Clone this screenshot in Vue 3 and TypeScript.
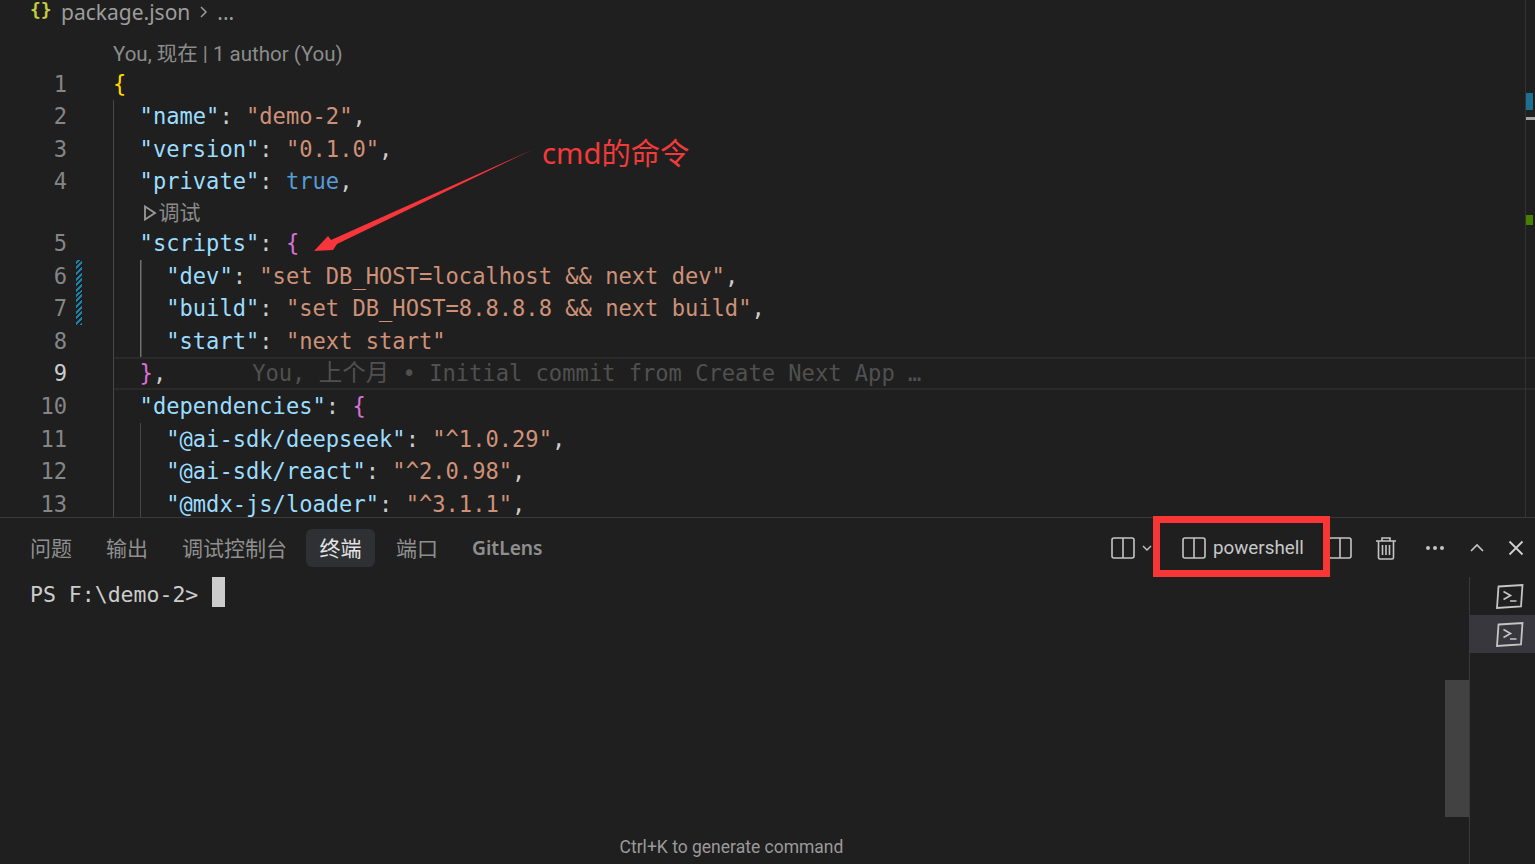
<script setup lang="ts">
type Tok = [string, string]
interface Line { n: number; indent: number; toks: Tok[]; guide2?: boolean; changed?: boolean; current?: boolean; ghost?: [string, string, string]; lensBefore?: boolean }

const kv = (k: string, v: string, vc = 's', tail = ','): Tok[] => [
  ['k', `"${k}"`], ['p', ': '], [vc, v], ['p', tail],
]

const lines: Line[] = [
  { n: 1, indent: 0, toks: [['y', '{']] },
  { n: 2, indent: 1, toks: kv('name', '"demo-2"') },
  { n: 3, indent: 1, toks: kv('version', '"0.1.0"') },
  { n: 4, indent: 1, toks: kv('private', 'true', 'b') },
  { n: 5, indent: 1, lensBefore: true, toks: kv('scripts', '{', 'm', '') },
  { n: 6, indent: 2, guide2: true, changed: true, toks: kv('dev', '"set DB_HOST=localhost && next dev"') },
  { n: 7, indent: 2, guide2: true, changed: true, toks: kv('build', '"set DB_HOST=8.8.8.8 && next build"') },
  { n: 8, indent: 2, guide2: true, toks: kv('start', '"next start"', 's', '') },
  { n: 9, indent: 1, current: true, ghost: ['You, ', '上个月', ' • Initial commit from Create Next App …'], toks: [['m', '}'], ['p', ',']] },
  { n: 10, indent: 1, toks: kv('dependencies', '{', 'm', '') },
  { n: 11, indent: 2, toks: kv('@ai-sdk/deepseek', '"^1.0.29"') },
  { n: 12, indent: 2, toks: kv('@ai-sdk/react', '"^2.0.98"') },
  { n: 13, indent: 2, toks: kv('@mdx-js/loader', '"^3.1.1"') },
]

const tabs = ['问题', '输出', '调试控制台', '终端', '端口', 'GitLens']
</script>

<template>
  <div class="app">
    <section class="editor">
      <div class="crumbs">
        <span class="json-icon">{}</span>
        <span class="crumb-name">package.json</span>
        <svg class="crumb-chev" width="10" height="14" viewBox="0 0 10 14"><path d="M2 2l5 5-5 5" fill="none" stroke="#9a9a9a" stroke-width="1.5" /></svg>
        <span class="crumb-more">...</span>
      </div>
      <div class="lens top-lens">You, 现在 | 1 author (You)</div>
      <template v-for="l in lines" :key="l.n">
        <div v-if="l.lensBefore" class="line lens-row">
          <span class="num"></span><span class="mark"></span>
          <div class="code"><span class="guide"></span><span class="debug">
            <svg width="14" height="16" viewBox="0 0 14 16"><path d="M2 1.500l10 6.500-10 6.500z" fill="none" stroke="#9a9a9a" stroke-width="1.8" /></svg>调试</span></div>
        </div>
        <div class="line" :class="{ current: l.current }">
          <span class="num">{{ l.n }}</span>
          <span class="mark" :class="{ changed: l.changed }"></span>
          <div class="code">
            <span v-if="l.indent > 0" class="guide"></span>
            <span v-if="l.indent > 1" class="guide" :class="{ active: l.guide2 }"></span>
            <span v-for="(t, i) in l.toks" :key="i" :class="t[0]">{{ t[1] }}</span>
            <span v-if="l.ghost" class="ghost">{{ l.ghost[0] }}<span class="ghost-cjk">{{ l.ghost[1] }}</span>{{ l.ghost[2] }}</span>
          </div>
        </div>
      </template>

      <div class="ruler">
        <i class="r-blue"></i><i class="r-gray"></i><i class="r-green"></i>
      </div>

      <svg class="arrow" width="240" height="120" viewBox="0 0 240 120">
        <path d="M4 106 L18 91 L21 95 L224 4 L27 99 L23 105 Z" fill="#f8353a" />
      </svg>
      <div class="note">cmd的命令</div>
    </section>

    <section class="panel">
      <header class="bar">
        <nav class="tabs">
          <span v-for="t in tabs" :key="t" class="tab" :class="{ on: t === '终端', git: t === 'GitLens' }">{{ t }}</span>
        </nav>
        <div class="tools">
          <svg class="ic split" width="24" height="24" viewBox="0 0 24 24"><rect x="1" y="2" width="22" height="20" rx="2" fill="none" stroke="#c5c5c5" stroke-width="1.6" /><path d="M12 2v20" stroke="#c5c5c5" stroke-width="1.6" /></svg>
          <svg class="ic caret" width="12" height="8" viewBox="0 0 12 8"><path d="M2 2l4 4 4-4" fill="none" stroke="#c5c5c5" stroke-width="1.4" /></svg>
          <div class="ps">
            <svg width="24" height="24" viewBox="0 0 24 24"><rect x="1" y="2" width="22" height="20" rx="2" fill="none" stroke="#c5c5c5" stroke-width="1.6" /><path d="M12 2v20" stroke="#c5c5c5" stroke-width="1.6" /></svg>
            <span>powershell</span>
            <div class="redbox"></div>
          </div>
          <svg class="ic split2" width="24" height="24" viewBox="0 0 24 24"><rect x="1" y="2" width="22" height="20" rx="2" fill="none" stroke="#c5c5c5" stroke-width="1.6" /><path d="M12 2v20" stroke="#c5c5c5" stroke-width="1.6" /></svg>
          <svg class="ic trash" width="22" height="24" viewBox="0 0 22 24"><path d="M1 5h20M7 5V2h8v3M3.500 5v16.500q0 1.500 1.500 1.500h12q1.500 0 1.500-1.500V5M7.500 9v10M11 9v10M14.500 9v10" fill="none" stroke="#c5c5c5" stroke-width="1.6" /></svg>
          <svg class="ic dots" width="20" height="6" viewBox="0 0 20 6"><circle cx="3" cy="3" r="2" fill="#c5c5c5" /><circle cx="10" cy="3" r="2" fill="#c5c5c5" /><circle cx="17" cy="3" r="2" fill="#c5c5c5" /></svg>
          <svg class="ic up" width="14" height="9" viewBox="0 0 14 9"><path d="M1 8l6-6 6 6" fill="none" stroke="#c5c5c5" stroke-width="1.7" /></svg>
          <svg class="ic close" width="16" height="16" viewBox="0 0 16 16"><path d="M1.500 1.500l13 13M14.500 1.500l-13 13" fill="none" stroke="#d0d0d0" stroke-width="1.8" /></svg>
        </div>
      </header>
      <div class="body">
        <div class="term">
          <div class="prompt">PS F:\demo-2&gt;<span class="cursor"></span></div>
          <div class="hint">Ctrl+K to generate command</div>
          <div class="thumb"></div>
        </div>
        <aside class="side">
          <div v-for="i in 2" :key="i" class="side-item" :class="{ sel: i === 2 }">
            <svg width="28" height="25" viewBox="0 0 28 25"><path d="M2.500 2.500L26.500 1 25 22.500 1 24z" fill="none" stroke="#c5c5c5" stroke-width="1.8" /><path d="M7.500 7.500l7 4-7 4M14 17h6.500" fill="none" stroke="#c5c5c5" stroke-width="1.7" /></svg>
          </div>
        </aside>
      </div>
    </section>
  </div>
</template>

<style>
html, body { margin: 0; background: #1f1f1f; }
</style>

<style scoped>
.app {
  width: 1535px;
  height: 864px;
  display: flex;
  flex-direction: column;
  overflow: hidden;
  background: #1f1f1f;
  font-family: "Noto Sans", "Noto Sans CJK SC", sans-serif;
}
.editor { position: relative; height: 517px; overflow: hidden; flex: none; }
.crumbs {
  height: 24px;
  line-height: 24px;
  margin-bottom: 14px;
  padding-left: 30px;
  display: flex;
  align-items: center;
  font-size: 21px;
  color: #9d9d9d;
}
.json-icon { color: #c3cb41; font-family: "DejaVu Sans Mono", monospace; font-size: 18px; font-weight: 700; letter-spacing: 0; width: 31px; margin-top: -5px; }
.crumb-chev { margin: 0 8px 0 9px; }
.lens { font-size: 20.500px; color: #8c8c8c; line-height: 30px; font-family: Roboto, "Noto Sans CJK SC", sans-serif; }
.top-lens { height: 29.7px; padding-left: 113px; padding-top: 1px; box-sizing: border-box; }
.line {
  display: flex;
  height: 32.6px;
  line-height: 32.6px;
  font-family: "DejaVu Sans Mono", "Noto Sans CJK SC", monospace;
  font-size: 22.1px;
  white-space: pre;
}
.lens-row { height: 29px; line-height: 29px; }
.num { width: 67px; text-align: right; color: #858585; flex: none; }
.current .num { color: #cccccc; }
.mark { width: 6px; margin: 0 31px 0 9px; flex: none; }
.mark.changed {
  background: repeating-linear-gradient(-45deg, #1b81a8 0 2px, #1f1f1f 2px 4px);
}
.code { flex: 1; display: flex; }
.current .code { box-shadow: inset 0 2px #2a2a2a, inset 0 -2px #2a2a2a; }
.guide { width: 26.6px; flex: none; box-shadow: inset 1px 0 #484848; }
.guide.active { box-shadow: inset 1.500px 0 #707070; }
.debug {
  display: flex;
  align-items: center;
  gap: 2px;
  margin-left: 3px;
  font-family: "Noto Sans", "Noto Sans CJK SC", sans-serif;
  font-size: 21px;
  color: #8c8c8c;
}
.k { color: #9cdcfe; }
.s { color: #ce9178; }
.p { color: #cccccc; }
.b { color: #569cd6; }
.y { color: #ffd700; }
.m { color: #da70d6; }
.ghost { color: #505050; margin-left: 86px; }
.ghost-cjk { font-size: 23.500px; }
.ruler {
  position: absolute;
  top: 0;
  right: 0;
  bottom: 0;
  width: 9px;
  border-left: 1px solid #333;
}
.ruler i { position: absolute; left: 0; }
.r-blue { top: 93px; width: 7px; height: 17px; background: #1b6f91; }
.r-gray { top: 117px; width: 9px; height: 3px; background: #a5a5a5; }
.r-green { top: 215px; width: 7px; height: 10px; background: #487e02; }
.arrow { position: absolute; left: 310px; top: 145px; }
.note {
  position: absolute;
  left: 542px;
  top: 132px;
  font-size: 29.3px;
  line-height: 42px;
  color: #f23a3a;
}
.panel { flex: 1; display: flex; flex-direction: column; border-top: 1px solid #3a3a3a; min-height: 0; }
.bar { height: 59px; flex: none; display: flex; align-items: center; padding-left: 16px; }
.tabs { display: flex; gap: 6px; align-items: center; margin-top: 1px; }
.tab {
  height: 38px;
  line-height: 38px;
  padding: 0 14px;
  border-radius: 6px;
  font-size: 21px;
  color: #8f8f8f;
}
.tab.on { background: #2f3034; color: #e4e4e4; padding: 0 13.500px; margin: 0 1px 0 -1px; }
.tab.git { font-size: 19.200px; font-weight: 600; }
.tools { margin-left: auto; display: flex; align-items: center; height: 100%; margin-right: 11px; }
.ps {
  position: relative;
  display: flex;
  align-items: center;
  gap: 7px;
  width: 146px;
  margin-left: 29px;
  font-family: Roboto, sans-serif;
  font-size: 18.8px;
  color: #c8c8c8;
}
.redbox {
  position: absolute;
  left: -29px;
  top: -20px;
  width: 163px;
  height: 47px;
  border: 7px solid #f83636;
}
.caret { margin-left: 6px; }
.trash { margin-left: 23px; }
.dots { margin-left: 28px; }
.up { margin-left: 25px; }
.close { margin-left: 24px; }
.body { flex: 1; display: flex; min-height: 0; }
.term { position: relative; flex: 1; display: flex; flex-direction: column; padding-left: 30px; }
.prompt {
  height: 32px;
  line-height: 35px;
  font-family: "DejaVu Sans Mono", monospace;
  font-size: 21.5px;
  color: #cccccc;
  white-space: pre;
  display: flex;
  align-items: flex-start;
}
.cursor { width: 13px; height: 30px; margin-left: 14px; background: #cccccc; }
.hint {
  margin-top: auto;
  padding-bottom: 5px;
  margin-left: -30px;
  text-align: center;
  font-family: Roboto, sans-serif;
  font-size: 17.5px;
  line-height: 24px;
  color: #9a9a9a;
  transform: translateX(-3px);
}
.thumb { position: absolute; right: 0; top: 103px; width: 24px; height: 137px; background: #424242; }
.side { width: 65px; flex: none; border-left: 1px solid #3a3a3a; }
.side-item { height: 38px; display: flex; align-items: center; padding-left: 26px; }
.side-item.sel { background: #37373d; }
</style>
